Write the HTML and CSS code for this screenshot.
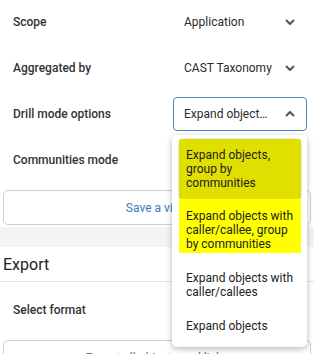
FILE: index.html
```html
<!DOCTYPE html>
<html lang="en">
<head>
    <meta charset="UTF-8">
    <meta name="viewport" content="width=device-width, initial-scale=1.0">
    <title>View settings</title>
    <link rel="stylesheet" href="styles.css">
</head>
<body>
    <!-- Graph settings -->
    <section class="panel settings">
        <div class="field-row">
            <span class="field-label">Scope</span>
            <div class="select">
                <span class="select-value">Application</span>
                <svg class="chevron" width="10" height="6" viewBox="0 0 10 6"><polyline points="1,1 5,5 9,1"/></svg>
            </div>
        </div>
        <div class="field-row">
            <span class="field-label">Aggregated by</span>
            <div class="select">
                <span class="select-value">CAST Taxonomy</span>
                <svg class="chevron" width="10" height="6" viewBox="0 0 10 6"><polyline points="1,1 5,5 9,1"/></svg>
            </div>
        </div>
        <div class="field-row">
            <span class="field-label">Drill mode options</span>
            <div class="select open">
                <span class="select-value">Expand objects, group by communities</span>
                <svg class="chevron" width="10" height="6" viewBox="0 0 10 6"><polyline points="1,5 5,1 9,5"/></svg>

                <!-- Open dropdown -->
                <ul class="menu">
                    <li class="menu-item active">Expand objects, group by communities</li>
                    <li class="menu-item selected">Expand objects with caller/callee, group by communities</li>
                    <li class="menu-item">Expand objects with caller/callees</li>
                    <li class="menu-item">Expand objects</li>
                </ul>
            </div>
        </div>
        <div class="field-row">
            <span class="field-label">Communities mode</span>
        </div>
        <div class="action">
            <button class="link-btn">Save a view</button>
        </div>
    </section>

    <!-- Export -->
    <section class="panel export">
        <h2 class="panel-title">Export</h2>
        <div class="field-row">
            <span class="field-label">Select format</span>
        </div>
        <div class="action">
            <button class="link-btn">Export all objects and links</button>
        </div>
    </section>
</body>
</html>
```

FILE: styles.css
```css
/* General */
body {
    margin: 0;
    font-family: Roboto, "Noto Sans", sans-serif;
    font-size: 12px;
    color: #2b2b2b;
    background: #f4f4f4;
    overflow: hidden;
}

/* Panels */
.panel {
    background: #fff;
    padding: 0 3px 2px;
}

.settings {
    margin-top: -1px;
    margin-bottom: 20px;
}

.panel-title {
    margin: 0 -3px 5px;
    padding: 8px 3px 6px;
    font-size: 16px;
    font-weight: 400;
    line-height: 20px;
    color: #222;
    border-bottom: 1px solid #e0e0e0;
}

/* Field rows */
.field-row {
    display: flex;
    align-items: center;
    height: 46px;
    padding: 0 4px 0 10px;
}

.field-label {
    flex: 1;
    font-weight: 500;
    color: #333;
}

/* Select */
.select {
    position: relative;
    display: flex;
    align-items: center;
    box-sizing: border-box;
    width: 134px;
    height: 34px;
    padding: 0 11px 0 10px;
    border: 1px solid transparent;
    border-radius: 4px;
    color: #2b2b2b;
}

.select.open {
    border-color: #4f87c4;
}

.select-value {
    flex: 1;
    min-width: 0;
    white-space: nowrap;
    overflow: hidden;
    text-overflow: ellipsis;
    margin-right: 12px;
}

.chevron {
    flex: none;
    fill: none;
    stroke: #555;
    stroke-width: 2;
}

/* Dropdown menu */
.menu {
    position: absolute;
    z-index: 10;
    top: 37px;
    left: -2px;
    width: 135px;
    box-sizing: border-box;
    margin: 0;
    padding: 4px 6px 4px 7px;
    list-style: none;
    background: #fff;
    border-radius: 5px;
    box-shadow: 0 2px 6px rgba(0, 0, 0, 0.28);
}

.menu-item {
    padding: 10px 4px 10px 7px;
    line-height: 14px;
    color: #222;
}

.menu-item.active {
    padding-top: 9px;
    padding-bottom: 9px;
    background: #dfdf00;
    border-radius: 3px;
    box-shadow: 0 0 2px rgba(0, 0, 0, 0.25);
}

.menu-item.selected {
    padding-bottom: 2px;
    margin-bottom: 8px;
    background: #ffff00;
}

/* Buttons */
.action {
    padding-top: 7px;
}

.link-btn {
    display: block;
    width: 100%;
    height: 35px;
    font-family: inherit;
    font-size: 12px;
    color: #3b7bbf;
    background: #fff;
    border: 1.5px solid #cfcfcf;
    border-radius: 5px;
    cursor: pointer;
}
```
